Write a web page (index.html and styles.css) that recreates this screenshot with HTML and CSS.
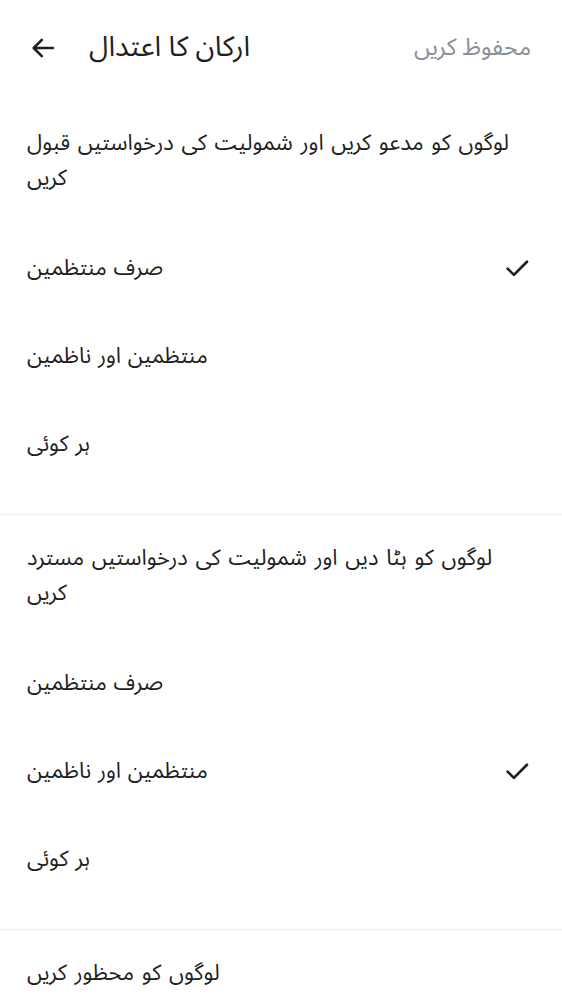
FILE: index.html
```html
<!DOCTYPE html>
<html lang="ur">
<head>
<meta charset="utf-8">
<link rel="stylesheet" href="styles.css">
</head>
<body>
<div class="page">
  <header class="header">
    <button class="back" aria-label="back">
      <svg width="28" height="28" viewBox="0 0 24 24"><path d="M20.5 12H4M11 5l-7 7 7 7" fill="none" stroke="#1f1f1f" stroke-width="2.2" stroke-linecap="round" stroke-linejoin="round"/></svg>
    </button>
    <h1 class="title">ارکان کا اعتدال</h1>
    <span class="save">محفوظ کریں</span>
  </header>

  <section class="section">
    <div class="section-title">لوگوں کو مدعو کریں اور شمولیت کی درخواستیں قبول کریں</div>
    <div class="option"><span>صرف منتظمین</span><svg class="check" width="30" height="30" viewBox="0 0 24 24"><path d="M4.5 12.5l5 5L20 7" fill="none" stroke="#1f1f1f" stroke-width="2.1" stroke-linecap="round" stroke-linejoin="round"/></svg></div>
    <div class="option"><span>منتظمین اور ناظمین</span></div>
    <div class="option"><span>ہر کوئی</span></div>
  </section>

  <section class="section">
    <div class="section-title">لوگوں کو ہٹا دیں اور شمولیت کی درخواستیں مسترد کریں</div>
    <div class="option"><span>صرف منتظمین</span></div>
    <div class="option"><span>منتظمین اور ناظمین</span><svg class="check" width="30" height="30" viewBox="0 0 24 24"><path d="M4.5 12.5l5 5L20 7" fill="none" stroke="#1f1f1f" stroke-width="2.1" stroke-linecap="round" stroke-linejoin="round"/></svg></div>
    <div class="option"><span>ہر کوئی</span></div>
  </section>

  <section class="section">
    <div class="section-title">لوگوں کو محظور کریں</div>
  </section>
</div>
</body>
</html>
```

FILE: styles.css
```css
html, body {
  margin: 0;
  padding: 0;
  background: #ffffff;
}
body {
  font-family: "Noto Sans Arabic", "Noto Sans Arabic UI", "DejaVu Sans", sans-serif;
  color: #1f1f1f;
  width: 562px;
  overflow: hidden;
}
.page {
  display: flex;
  flex-direction: column;
}
.header {
  display: flex;
  align-items: center;
  height: 96px;
  margin-bottom: 4px;
  padding: 0 31px 0 29px;
}
.back {
  border: 0;
  background: none;
  padding: 0;
  width: 28px;
  height: 28px;
  display: flex;
  align-items: center;
  justify-content: center;
  margin-right: 32px;
}
.title {
  font-size: 28px;
  line-height: 34px;
  font-weight: 400;
  margin: 0;
  flex: 1;
}
.save {
  font-size: 23.5px;
  line-height: 30px;
  color: #8a8f98;
}
.section {
  display: flex;
  flex-direction: column;
  padding: 26px 30px 26px 27px;
  border-bottom: 1px solid #eceef2;
}
.section:last-child {
  border-bottom: 0;
}
.section-title {
  font-size: 22px;
  line-height: 35px;
  word-spacing: 2px;
  margin-right: -6px;
}
.option {
  display: flex;
  align-items: center;
  justify-content: space-between;
  height: 88px;
  font-size: 22px;
  line-height: 30px;
  word-spacing: 1px;
}
.section-title + .option {
  margin-top: 28px;
}
.check {
  display: block;
}
```
